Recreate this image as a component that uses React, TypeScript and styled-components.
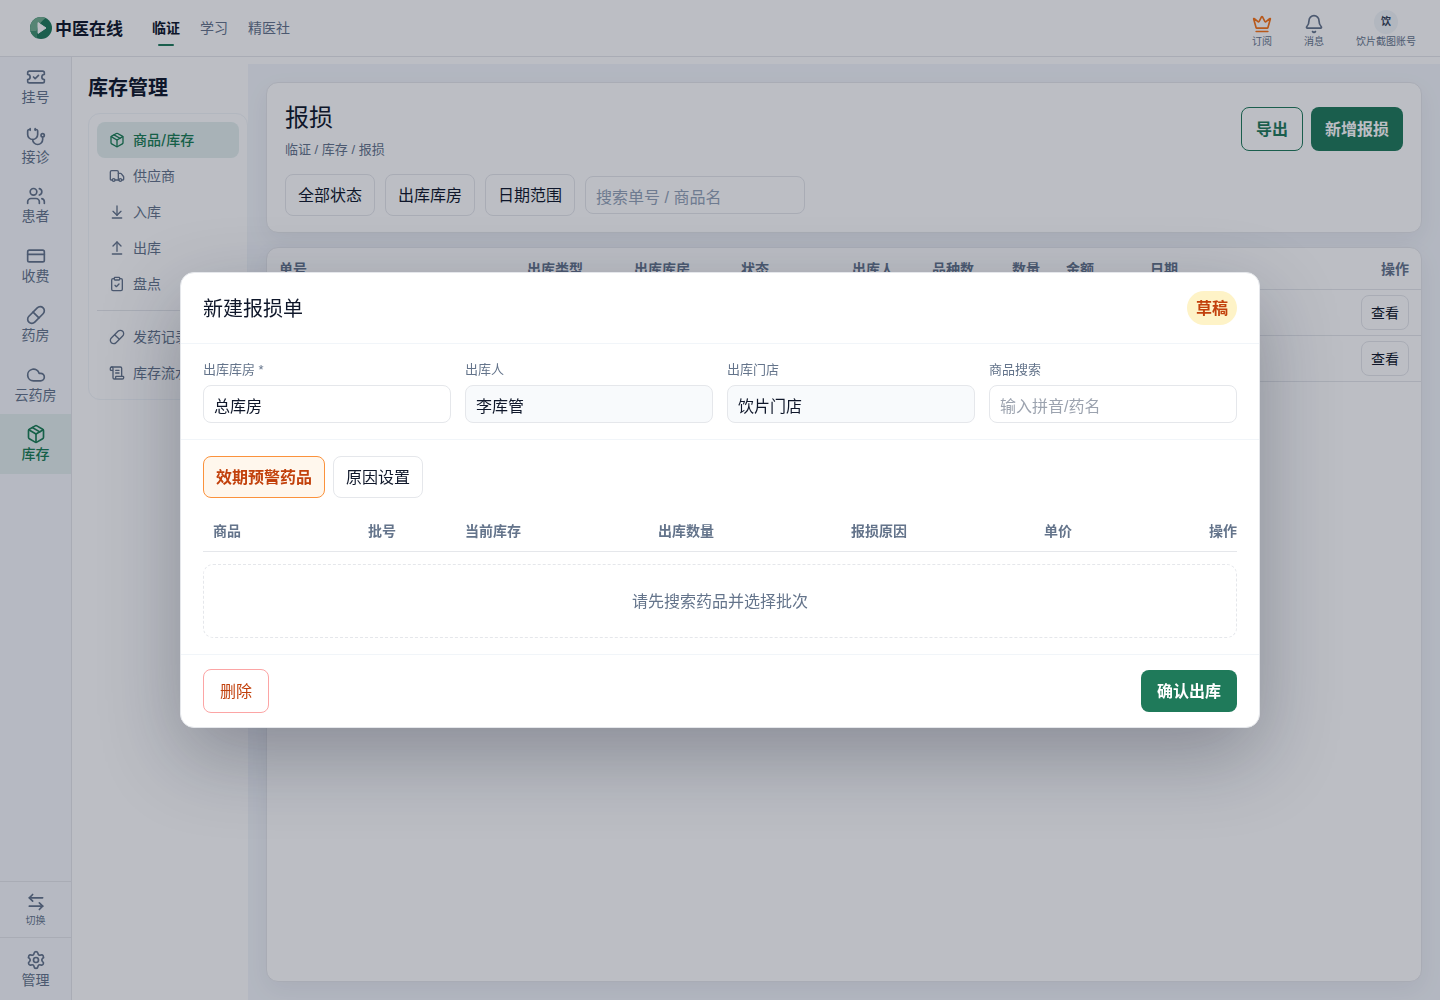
import React from "react";
import styled, { createGlobalStyle, css } from "styled-components";
import {
  ArrowDownToLine,
  ArrowLeftRight,
  ArrowUpFromLine,
  Bell,
  ClipboardCheck,
  Cloud,
  CreditCard,
  Crown,
  Package,
  Pill,
  ScrollText,
  Settings,
  Stethoscope,
  TicketCheck,
  Truck,
  Users,
  type LucideIcon,
} from "lucide-react";

const color = {
  ink: "#0f172a",
  muted: "#64748b",
  line: "#e5e7eb",
  softLine: "#f1f5f9",
  green: "#1f7a5a",
  greenText: "#1a7d54",
  greenSoft: "#e3efee",
  rust: "#c2410c",
  rail: "#f7f9fd",
  canvas: "#f3f6fb",
};

const GlobalStyle = createGlobalStyle`
  *, *::before, *::after { box-sizing: border-box; }
  body {
    margin: 0;
    background: #fff;
    color: ${color.ink};
    font-family: "Liberation Sans", "Noto Sans CJK SC", sans-serif;
    font-size: 16px;
  }
  button, input { font: inherit; color: inherit; }
  button { cursor: pointer; white-space: nowrap; }
  a { color: inherit; text-decoration: none; }
  h1, h2, p { margin: 0; }
`;

const Shell = styled.div`
  display: flex;
  flex-direction: column;
  height: calc(100vh - 1px);
`;

/* ---------- top bar ---------- */

const TopBar = styled.header`
  display: flex;
  align-items: center;
  height: 57px;
  flex: none;
  padding: 0 24px 0 30px;
  border-bottom: 1px solid ${color.line};
`;

const Brand = styled.a`
  display: flex;
  align-items: center;
  gap: 3px;
  font-family: "Noto Sans CJK SC", sans-serif;
  font-size: 17px;
  line-height: 24px;
  font-weight: 700;
`;

const TopNav = styled.nav`
  display: flex;
  gap: 20px;
  margin-left: 29px;
`;

const TopLink = styled.a<{ $active?: boolean }>`
  display: flex;
  flex-direction: column;
  align-items: center;
  padding: 12px 0 4px;
  font-size: 14px;
  line-height: 20px;
  color: ${(p) => (p.$active ? color.ink : color.muted)};
  font-weight: ${(p) => (p.$active ? 700 : 400)};

  &::after {
    content: "";
    width: 16px;
    height: 2px;
    margin-top: 6px;
    border-radius: 1px;
    background: ${(p) => (p.$active ? color.green : "transparent")};
  }
`;

const TopActions = styled.div`
  display: flex;
  align-items: flex-end;
  gap: 32px;
  margin-left: auto;
  padding-top: 3px;
`;

const TopAction = styled.button`
  display: flex;
  flex-direction: column;
  align-items: center;
  gap: 1px;
  padding: 0;
  border: 0;
  background: none;
  font-size: 10px;
  line-height: 14px;
  color: ${color.muted};
`;

const Avatar = styled.span`
  display: grid;
  place-items: center;
  width: 24px;
  height: 24px;
  border-radius: 50%;
  background: #f1f5f9;
  color: #334155;
  font-weight: 700;
`;

/* ---------- icon rail ---------- */

const Body = styled.div`
  display: flex;
  flex: 1;
  min-height: 0;
`;

const Rail = styled.aside`
  display: flex;
  flex-direction: column;
  justify-content: space-between;
  width: 72px;
  flex: none;
  border-right: 1px solid ${color.line};
  background: ${color.rail};
`;

const RailNav = styled.nav`
  display: grid;
  grid-auto-rows: 1fr;
  height: 417px;
`;

const railCell = css`
  display: flex;
  flex-direction: column;
  align-items: center;
  width: 100%;
  color: ${color.muted};
  font-size: 14px;
  line-height: 20px;
`;

const RailLink = styled.a<{ $active?: boolean }>`
  ${railCell}
  padding-top: 10px;
  ${(p) =>
    p.$active &&
    css`
      background: ${color.greenSoft};
      color: ${color.greenText};
      font-weight: 500;
    `}
`;

const RailButton = styled.button<{ $small?: boolean }>`
  ${railCell}
  padding: ${(p) => (p.$small ? "10px 0 8px" : "12px 0 10px")};
  border: 0;
  border-top: 1px solid ${color.line};
  background: none;
  ${(p) =>
    p.$small &&
    css`
      font-size: 10px;
      line-height: 17px;
    `}
`;

/* ---------- section menu ---------- */

const Section = styled.aside`
  width: 176px;
  flex: none;
  padding: 16px 0 0 16px;
`;

const SectionTitle = styled.h2`
  font-size: 20px;
  line-height: 30px;
  font-weight: 700;
`;

const Menu = styled.nav`
  margin-top: 10px;
  padding: 8px;
  border: 1px solid ${color.softLine};
  border-radius: 12px;
  font-family: Inter, "Noto Sans CJK SC", sans-serif;
`;

const MenuLink = styled.a<{ $active?: boolean }>`
  display: flex;
  align-items: center;
  gap: 8px;
  height: 36px;
  padding: 0 12px;
  border-radius: 8px;
  font-size: 14px;
  line-height: 20px;
  white-space: nowrap;
  overflow: hidden;
  color: ${(p) => (p.$active ? color.greenText : color.muted)};
  background: ${(p) => (p.$active ? color.greenSoft : "none")};
  font-weight: ${(p) => (p.$active ? 500 : 400)};

  svg { flex: none; }
`;

const MenuRule = styled.hr`
  margin: 8px 0;
  border: 0;
  border-top: 1px solid ${color.line};
`;

/* ---------- main area ---------- */

const Main = styled.main`
  display: flex;
  flex-direction: column;
  gap: 14px;
  flex: 1;
  min-width: 0;
  margin-top: 7px;
  padding: 18px;
  background: ${color.canvas};
`;

const Card = styled.section`
  border: 1px solid ${color.line};
  border-radius: 12px;
  background: #fff;
  box-shadow: 0 8px 24px rgba(15, 23, 42, 0.06);
`;

const HeadCard = styled(Card)`
  padding: 16px 18px;
`;

const TableCard = styled(Card)`
  flex: 1;
  overflow: hidden;
`;

const Row = styled.div<{ $gap: number }>`
  display: flex;
  align-items: center;
  gap: ${(p) => p.$gap}px;
`;

const Spread = styled.div`
  display: flex;
  align-items: center;
  justify-content: space-between;
`;

const PageTitle = styled.h1`
  font-size: 24px;
  line-height: 38px;
  font-weight: 400;
`;

const Crumbs = styled.p`
  margin-top: 4px;
  font-size: 13px;
  line-height: 18px;
  color: ${color.muted};
`;

const Filters = styled(Row)`
  margin-top: 15px;
`;

type Tone = "plain" | "primary" | "outline" | "warn" | "danger";

const tones: Record<Tone, ReturnType<typeof css>> = {
  plain: css`
    border: 1px solid ${color.line};
    background: #fff;
  `,
  primary: css`
    border: 0;
    background: ${color.green};
    color: #fff;
    font-weight: 700;
  `,
  outline: css`
    border: 1px solid ${color.green};
    background: #fff;
    color: ${color.green};
    font-weight: 700;
  `,
  warn: css`
    border: 1px solid #fb923c;
    background: #fff7ed;
    color: ${color.rust};
    font-weight: 700;
  `,
  danger: css`
    border: 1px solid #fca5a5;
    background: #fff;
    color: ${color.rust};
  `,
};

const Button = styled.button<{ $tone?: Tone; $height?: number; $pad?: number }>`
  height: ${(p) => p.$height ?? 42}px;
  padding: 2px ${(p) => p.$pad ?? 12}px 0;
  border-radius: 8px;
  line-height: 24px;
  ${(p) => tones[p.$tone ?? "plain"]}
`;

const SmallButton = styled(Button)`
  height: 35px;
  padding: 0 9px;
  font-size: 14px;
  line-height: 20px;
`;

const TextInput = styled.input`
  width: 100%;
  height: 38px;
  padding: 2px 10px 0;
  border: 1px solid ${color.line};
  border-radius: 8px;
  background: #fff;
  line-height: 24px;
  outline: none;

  &:read-only { background: #f8fafc; }
  &:placeholder-shown { padding-top: 6px; }
  &::placeholder { color: #94a3b8; opacity: 1; }
`;

const SearchInput = styled(TextInput)`
  width: 220px;
`;

const DataTable = styled.table`
  width: 100%;
  table-layout: fixed;
  border-collapse: separate;
  border-spacing: 0;
  font-size: 14px;
  line-height: 20px;

  th, td {
    padding: 0 12px;
    text-align: left;
    border-bottom: 1px solid ${color.line};
  }
  th {
    height: 42px;
    color: ${color.muted};
    font-weight: 700;
    white-space: nowrap;
  }
  td { height: 46px; }
  th:last-child, td:last-child { text-align: right; }
`;

/* ---------- dialog ---------- */

const Overlay = styled.div`
  position: fixed;
  inset: 0 0 1px;
  display: grid;
  place-items: center;
  background: rgba(15, 23, 42, 0.28);
`;

const Dialog = styled.div`
  width: 1080px;
  max-width: calc(100vw - 48px);
  border: 1px solid ${color.line};
  border-radius: 14px;
  background: #fff;
  box-shadow: 0 28px 80px rgba(15, 23, 42, 0.3);
`;

const DialogHead = styled(Spread)`
  padding: 18px 22px;
  border-bottom: 1px solid ${color.softLine};
`;

const DialogTitle = styled.h2`
  padding-top: 2px;
  font-size: 20px;
  line-height: 30px;
  font-weight: 400;
`;

const Badge = styled.span`
  padding: 6px 9px 4px;
  border-radius: 17px;
  background: #fef3c7;
  color: ${color.rust};
  font-weight: 700;
  line-height: 24px;
`;

const FormGrid = styled.div`
  display: grid;
  grid-template-columns: repeat(4, 1fr);
  gap: 14px;
  padding: 16px 22px;
  border-bottom: 1px solid ${color.softLine};
`;

const Field = styled.label`
  display: grid;
  gap: 6px;
  font-size: 13px;
  line-height: 19px;
  color: ${color.muted};

  input {
    font-size: 16px;
    color: ${color.ink};
  }
  input::placeholder { color: #9ca3af; }
`;

const DialogBody = styled.div`
  padding: 16px 22px;
  border-bottom: 1px solid ${color.softLine};
`;

const LineTable = styled(DataTable)`
  margin-top: 12px;

  th { padding: 0 0 0 10px; }
`;

const Empty = styled.p`
  margin-top: 12px;
  padding: 25px 24px 23px;
  border: 1px dashed ${color.line};
  border-radius: 10px;
  text-align: center;
  line-height: 24px;
  color: ${color.muted};
`;

const DialogFoot = styled(Spread)`
  padding: 14px 22px;
`;

/* ---------- data ---------- */

interface NavItem {
  icon: LucideIcon;
  label: string;
  active?: boolean;
}

const railItems: NavItem[] = [
  { icon: TicketCheck, label: "挂号" },
  { icon: Stethoscope, label: "接诊" },
  { icon: Users, label: "患者" },
  { icon: CreditCard, label: "收费" },
  { icon: Pill, label: "药房" },
  { icon: Cloud, label: "云药房" },
  { icon: Package, label: "库存", active: true },
];

const stockItems: NavItem[] = [
  { icon: Package, label: "商品/库存", active: true },
  { icon: Truck, label: "供应商" },
  { icon: ArrowDownToLine, label: "入库" },
  { icon: ArrowUpFromLine, label: "出库" },
  { icon: ClipboardCheck, label: "盘点" },
];

const recordItems: NavItem[] = [
  { icon: Pill, label: "发药记录" },
  { icon: ScrollText, label: "库存流水" },
];

const listColumns: [string, number][] = [
  ["单号", 248],
  ["出库类型", 107],
  ["出库库房", 107],
  ["状态", 111],
  ["出库人", 80],
  ["品种数", 80],
  ["数量", 54],
  ["金额", 84],
  ["日期", 183],
  ["操作", 100],
];

const lineColumns: [string, number][] = [
  ["商品", 155],
  ["批号", 97],
  ["当前库存", 193],
  ["出库数量", 193],
  ["报损原因", 193],
  ["单价", 103],
  ["操作", 100],
];

function Logo() {
  return (
    <svg width="22" height="22" viewBox="0 0 22 22" aria-hidden="true">
      <circle cx="11" cy="11" r="11" fill="#1f7a5a" />
      <path d="M15.6 1A11 11 0 0 0 0 11A11 11 0 0 0 7 21.2C5.4 15 6.6 8 15.6 1Z" fill="#72b090" />
      <path d="M0.4 14A11 11 0 0 0 7 21.2C6.3 18.8 6 16.4 6.2 14Z" fill="#3f9270" />
      <path d="M8 5.6 16 11 8 16.4Z" fill="#fff" stroke="#fff" strokeLinejoin="round" />
    </svg>
  );
}

function MenuGroup({ items }: { items: NavItem[] }) {
  return (
    <>
      {items.map(({ icon: Icon, label, active }) => (
        <MenuLink key={label} href="#" $active={active}>
          <Icon size={16} strokeWidth={2} />
          {label}
        </MenuLink>
      ))}
    </>
  );
}

function Columns({ columns }: { columns: [string, number][] }) {
  return (
    <>
      <colgroup>
        {columns.map(([name, width]) => (
          <col key={name} width={width} />
        ))}
      </colgroup>
      <thead>
        <tr>
          {columns.map(([name]) => (
            <th key={name} scope="col">{name}</th>
          ))}
        </tr>
      </thead>
    </>
  );
}

export default function App() {
  return (
    <>
      <GlobalStyle />
      <Shell>
        <TopBar>
          <Brand href="#">
            <Logo />
            中医在线
          </Brand>
          <TopNav>
            <TopLink href="#" $active>临证</TopLink>
            <TopLink href="#">学习</TopLink>
            <TopLink href="#">精医社</TopLink>
          </TopNav>
          <TopActions>
            <TopAction type="button">
              <Crown size={20} color="#f97316" />
              订阅
            </TopAction>
            <TopAction type="button">
              <Bell size={20} />
              消息
            </TopAction>
            <TopAction type="button">
              <Avatar>饮</Avatar>
              饮片截图账号
            </TopAction>
          </TopActions>
        </TopBar>

        <Body>
          <Rail>
            <RailNav>
              {railItems.map(({ icon: Icon, label, active }) => (
                <RailLink key={label} href="#" $active={active}>
                  <Icon size={20} />
                  {label}
                </RailLink>
              ))}
            </RailNav>
            <div>
              <RailButton type="button" $small>
                <ArrowLeftRight size={20} />
                切换
              </RailButton>
              <RailButton type="button">
                <Settings size={20} />
                管理
              </RailButton>
            </div>
          </Rail>

          <Section>
            <SectionTitle>库存管理</SectionTitle>
            <Menu>
              <MenuGroup items={stockItems} />
              <MenuRule />
              <MenuGroup items={recordItems} />
            </Menu>
          </Section>

          <Main>
            <HeadCard>
              <Spread>
                <div>
                  <PageTitle>报损</PageTitle>
                  <Crumbs>临证 / 库存 / 报损</Crumbs>
                </div>
                <Row $gap={8}>
                  <Button type="button" $tone="outline" $height={44} $pad={14}>导出</Button>
                  <Button type="button" $tone="primary" $height={44} $pad={14}>新增报损</Button>
                </Row>
              </Spread>
              <Filters $gap={10}>
                <Button type="button">全部状态</Button>
                <Button type="button">出库库房</Button>
                <Button type="button">日期范围</Button>
                <SearchInput type="text" aria-label="搜索" placeholder="搜索单号 / 商品名" />
              </Filters>
            </HeadCard>

            <TableCard>
              <DataTable>
                <Columns columns={listColumns} />
                <tbody>
                  {[0, 1].map((row) => (
                    <tr key={row}>
                      <td colSpan={9} />
                      <td>
                        <SmallButton type="button">查看</SmallButton>
                      </td>
                    </tr>
                  ))}
                </tbody>
              </DataTable>
            </TableCard>
          </Main>
        </Body>
      </Shell>

      <Overlay>
        <Dialog role="dialog" aria-modal="true" aria-labelledby="dialog-title">
          <DialogHead>
            <DialogTitle id="dialog-title">新建报损单</DialogTitle>
            <Badge>草稿</Badge>
          </DialogHead>
          <FormGrid>
            <Field>
              出库库房 *
              <TextInput type="text" defaultValue="总库房" />
            </Field>
            <Field>
              出库人
              <TextInput type="text" value="李库管" readOnly />
            </Field>
            <Field>
              出库门店
              <TextInput type="text" value="饮片门店" readOnly />
            </Field>
            <Field>
              商品搜索
              <TextInput type="text" placeholder="输入拼音/药名" />
            </Field>
          </FormGrid>
          <DialogBody>
            <Row $gap={8}>
              <Button type="button" $tone="warn">效期预警药品</Button>
              <Button type="button">原因设置</Button>
            </Row>
            <LineTable>
              <Columns columns={lineColumns} />
            </LineTable>
            <Empty>请先搜索药品并选择批次</Empty>
          </DialogBody>
          <DialogFoot>
            <Button type="button" $tone="danger" $height={44} $pad={16}>删除</Button>
            <Button type="button" $tone="primary" $pad={16}>确认出库</Button>
          </DialogFoot>
        </Dialog>
      </Overlay>
    </>
  );
}
